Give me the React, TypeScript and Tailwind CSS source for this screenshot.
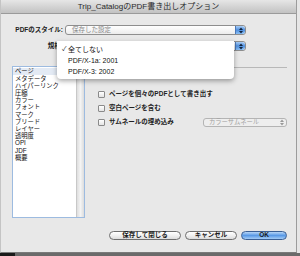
import React from 'react';

const FONT = "font-['Liberation_Sans','Noto_Sans_CJK_JP',sans-serif]";

const PANES = ['ページ', 'メタデータ', 'ハイパーリンク', '圧縮', 'カラー', 'フォント', 'マーク', 'ブリード', 'レイヤー', '透明度', 'OPI', 'JDF', '概要'];

const Stepper: React.FC<{ dim?: boolean }> = ({ dim }) => (
  <div
    className={
      dim
        ? 'flex h-full w-[9px] items-center justify-center rounded-r-[3px]'
        : 'flex h-full w-[10px] items-center justify-center rounded-r-[3px] border-l border-[#4a78b8] bg-gradient-to-b from-[#a9cdf5] via-[#4f8fde] to-[#8cc0f4]'
    }
  >
    <svg width="4" height="7" viewBox="0 0 4 7">
      <path d="M0 3 L2 0.5 L4 3 Z M0 4 L2 6.5 L4 4 Z" fill={dim ? '#9a9a9a' : '#10233e'} />
    </svg>
  </div>
);

const Select: React.FC<{ text?: string; className?: string }> = ({ text, className }) => (
  <div className={`flex h-[10px] items-center rounded-[3px] border border-[#8e8e8e] bg-gradient-to-b from-white to-[#ececec] ${className ?? ''}`}>
    <span className="flex-1 pl-[6px] text-[6.5px] leading-none text-[#888]">{text}</span>
    <Stepper />
  </div>
);

const Check: React.FC<{ label?: string }> = ({ label }) => (
  <div className="flex h-[8px] items-center gap-[4px]">
    <div className="h-[7px] w-[7px] rounded-[1px] border border-[#8a8a8a] bg-gradient-to-b from-white to-[#e4e4e4]" />
    {label && <span className="text-[6.5px] font-bold leading-none text-[#222]">{label}</span>}
  </div>
);

const Button: React.FC<{ label: string; w: string; primary?: boolean }> = ({ label, w, primary }) => (
  <div
    className={
      primary
        ? `flex h-[9px] ${w} items-center justify-center rounded-full border border-[#3a5f94] bg-gradient-to-b from-[#b7d6f7] via-[#5a9ae6] to-[#a4cdf6]`
        : `flex h-[9px] ${w} items-center justify-center rounded-full border border-[#6e6e6e] bg-gradient-to-b from-white via-[#f0f0f0] to-[#dcdcdc]`
    }
  >
    <span className="text-[6.5px] font-bold leading-none text-[#1a1a1a]">{label}</span>
  </div>
);

export default function App() {
  return (
    <div className={`${FONT} flex h-[256px] w-[300px] flex-col overflow-hidden bg-[#e6e6e6]`}>
      <div className="flex h-[253px] w-[297px] flex-col border-l border-r border-b border-l-[#c4c4c4] border-r-[#9c9c9c] border-b-[#7a7a7a] bg-[#e8e8e8]">
        {/* title bar */}
        <div className="flex h-[14px] shrink-0 items-center justify-center border-b border-[#9a9a9a] bg-gradient-to-b from-[#e6e6e6] to-[#c2c2c2]">
          <span className="text-[8px] leading-none text-[#2a2a2a]">Trip_CatalogのPDF書き出しオプション</span>
        </div>

        <div className="relative flex flex-1 flex-col">
          <div className="mt-[11px] flex items-center">
            <span className="w-[63px] pr-[1px] text-right text-[6.5px] font-bold leading-none text-[#222]">PDFのスタイル:</span>
            <Select text="保存した設定" className="ml-[1px] w-[181px]" />
          </div>
          <div className="mt-[6px] flex items-center">
            <span className="w-[63px] pr-[1px] text-right text-[6.5px] font-bold leading-none text-[#222]">規格:</span>
            <Select className="ml-[1px] w-[181px]" />
          </div>

          <div className="mt-[15px] flex">
            {/* pane list */}
            <div className="ml-[11px] flex h-[152px] w-[73px] border border-[#9dbbe0] bg-white">
              <div className="flex flex-1 flex-col pt-[1px]">
                {PANES.map((p, i) => (
                  <div
                    key={p}
                    className={`flex h-[7.2px] items-center pl-[2px] text-[6.3px] leading-none text-[#111] ${i === 0 ? 'bg-[#e3eaf4]' : ''}`}
                  >
                    {p}
                  </div>
                ))}
              </div>
              <div className="w-[8px] border-l border-[#c8c8c8] bg-gradient-to-r from-[#dedede] via-[#f4f4f4] to-[#dcdcdc]" />
            </div>

            {/* right panel */}
            <div className="ml-[10px] flex flex-1 flex-col pr-[9px]">
              <div className="mt-[1px] h-[1px] bg-[#b8b8b8]" />
              <div className="mt-[3px] pl-[3px]">
                <Check />
              </div>
              <div className="mt-[11px] flex flex-col gap-[6px] pl-[3px]">
                <Check label="ページを個々のPDFとして書き出す" />
                <Check label="空白ページを含む" />
                <div className="flex items-center">
                  <Check label="サムネールの埋め込み" />
                  <div className="ml-auto flex h-[9px] w-[84px] items-center rounded-[3px] border border-[#b4b4b4] bg-[#eeeeee]">
                    <span className="flex-1 pl-[5px] text-[6.3px] leading-none text-[#a0a0a0]">カラーサムネール</span>
                    <Stepper dim />
                  </div>
                </div>
              </div>
            </div>
          </div>

          <div className="mt-[13px] flex justify-end gap-[4px] pr-[9px]">
            <Button label="保存して閉じる" w="w-[72px]" />
            <Button label="キャンセル" w="w-[52px]" />
            <Button label="OK" w="w-[46px]" primary />
          </div>

          {/* open popup menu */}
          <div className="absolute left-[56px] top-[27px] flex h-[38px] w-[177px] flex-col rounded-b-[4px] bg-white pt-[3px] shadow-[0_2px_5px_rgba(0,0,0,0.35)]">
            <div className="flex h-[11px] items-center">
              <span className="w-[11px] pl-[5px] text-[6.5px] leading-none text-[#111]">✓</span>
              <span className="text-[7px] leading-none text-[#111]">全てしない</span>
            </div>
            <div className="flex h-[11px] items-center pl-[11px] text-[7px] leading-none text-[#111]">PDF/X-1a: 2001</div>
            <div className="flex h-[11px] items-center pl-[11px] text-[7px] leading-none text-[#111]">PDF/X-3: 2002</div>
          </div>
        </div>
      </div>
      <div className="flex flex-1 bg-[#6a6a6a]">
        <div className="w-[15px] bg-[#1a1a1a]" />
      </div>
    </div>
  );
}
